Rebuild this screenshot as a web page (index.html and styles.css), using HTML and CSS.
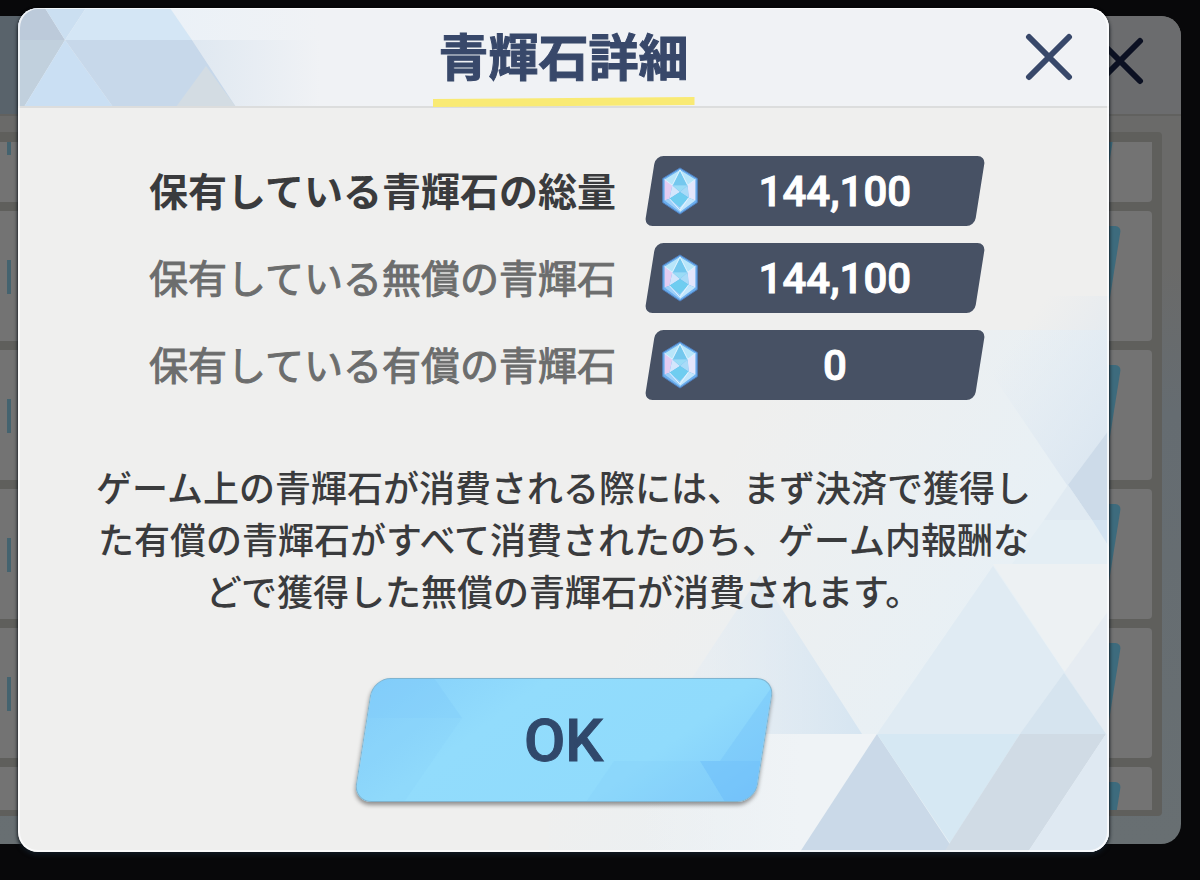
FILE: index.html
```html
<!DOCTYPE html>
<html lang="ja">
<head>
  <meta charset="UTF-8">
  <meta name="viewport" content="width=device-width, initial-scale=1">
  <title>青輝石詳細</title>
  <link rel="stylesheet" href="styles.css">
</head>
<body>
  <svg class="defs" aria-hidden="true">
    <symbol id="gem" viewBox="0 0 40 50">
      <path d="M20 1 L38 12 V37 L20 49 L2 37 V12 Z" fill="#6aaeee" stroke="#4f7fc0" stroke-linejoin="round"/>
      <path d="M20 3 L36 13 L28 19 L20 9 L12 19 L4 13 Z" fill="#b8e6fa"/>
      <path d="M20 3 L28 19 H12 Z" fill="#74c8ee"/>
      <path d="M4 13 L12 19 L9 33 L4 35 Z" fill="#e4cdf2"/>
      <path d="M12 19 L20 26 L9 33 Z" fill="#d3e6fc"/>
      <path d="M12 19 H28 L20 26 Z" fill="#9adcf6"/>
      <path d="M28 19 L36 13 V35 L29 32 Z" fill="#e4e6fc"/>
      <path d="M28 19 L29 32 L20 26 Z" fill="#a9dbf8"/>
      <path d="M20 26 L29 32 L20 42 L9 33 Z" fill="#6fcdf0"/>
      <path d="M4 35 L9 33 L20 42 V47 Z" fill="#9ed0fa"/>
      <path d="M36 35 L29 32 L20 42 V47 Z" fill="#c2e6fc"/>
      <path d="M20 3 L28 19 L36 13 M20 3 L12 19 L4 13 M29 32 L20 45 L9 33" fill="none" stroke="#e4f5ff"/>
    </symbol>
    <symbol id="cross" viewBox="0 0 48 48">
      <path d="M4 4 L44 44 M44 4 L4 44" fill="none" stroke="currentColor" stroke-width="6" stroke-linecap="round"/>
    </symbol>
  </svg>

  <div class="back-panel" aria-hidden="true">
    <div class="back-header">
      <svg class="cross"><use href="#cross"/></svg>
    </div>
    <div class="back-frame">
      <div class="back-list">
        <div class="back-row scrolled"><i class="tick"></i><i class="buy"></i></div>
        <div class="back-row"><i class="tick"></i><i class="buy"></i></div>
        <div class="back-row"><i class="tick"></i><i class="buy"></i></div>
        <div class="back-row"><i class="tick"></i><i class="buy"></i></div>
        <div class="back-row"><i class="tick"></i><i class="buy"></i></div>
        <div class="back-row"><i class="tick"></i><i class="buy"></i></div>
      </div>
    </div>
  </div>

  <main class="modal" role="dialog" aria-labelledby="modal-title">
    <header class="modal-header">
      <svg class="header-art" viewBox="18 8 402 98" aria-hidden="true">
        <defs>
          <linearGradient id="fade" gradientUnits="userSpaceOnUse" x1="190" y1="0" x2="320" y2="0">
            <stop offset="0" stop-color="#dfe8f1"/>
            <stop offset="1" stop-color="#f0f2f5"/>
          </linearGradient>
          <linearGradient id="fade-top" gradientUnits="userSpaceOnUse" x1="170" y1="0" x2="320" y2="0">
            <stop offset="0" stop-color="#ebf1f7"/>
            <stop offset="1" stop-color="#f0f2f5"/>
          </linearGradient>
        </defs>
        <path d="M170 8 H420 V40 H192 Z" fill="url(#fade-top)"/>
        <path d="M192 40 H420 V107 H236 Z" fill="url(#fade)"/>
        <path d="M18 8 H45 L65 40 H18 Z" fill="#bccada"/>
        <path d="M45 8 H86 L65 40 Z" fill="#cbdff1"/>
        <path d="M86 8 H170 L192 40 H65 Z" fill="#d4e6f5"/>
        <path d="M18 40 H65 L24 107 H18 Z" fill="#c1d0dd"/>
        <path d="M65 40 L113 107 H24 Z" fill="#cadff3"/>
        <path d="M65 40 H192 L236 107 H113 Z" fill="#c7d8ea"/>
        <path d="M206 66 L236 107 H176 Z" fill="#d3dce3"/>
      </svg>
      <h1 id="modal-title">青輝石詳細</h1>
      <button class="close" type="button" aria-label="閉じる">
        <svg class="cross" aria-hidden="true"><use href="#cross"/></svg>
      </button>
    </header>

    <div class="modal-body">
      <svg class="body-art" viewBox="549 252 560 600" aria-hidden="true">
        <defs>
          <linearGradient id="haze" gradientUnits="userSpaceOnUse" x1="700" y1="500" x2="960" y2="650">
            <stop offset="0" stop-color="#e8f0f5" stop-opacity="0"/>
            <stop offset="1" stop-color="#e8f0f5"/>
          </linearGradient>
          <linearGradient id="left-fade">
            <stop offset="0" stop-color="#e4ecf4" stop-opacity="0.2"/>
            <stop offset="1" stop-color="#d6e5f1"/>
          </linearGradient>
          <linearGradient id="white-fade" gradientUnits="userSpaceOnUse" x1="640" y1="0" x2="800" y2="0">
            <stop offset="0" stop-color="#eff3f6" stop-opacity="0"/>
            <stop offset="1" stop-color="#eff3f6"/>
          </linearGradient>
          <linearGradient id="top-fade" gradientUnits="userSpaceOnUse" x1="1000" y1="360" x2="1109" y2="440">
            <stop offset="0" stop-color="#dfe8f1" stop-opacity="0"/>
            <stop offset="1" stop-color="#dce7f1"/>
          </linearGradient>
        </defs>
        <path d="M549 330 H1109 V852 H549 Z" fill="url(#haze)"/>
        <path d="M962 330 L985 296 H1109 V547 Z" fill="url(#top-fade)"/>
        <path d="M1109 430 L1068 485 L1092 520 H1109 Z" fill="#cddbe9"/>
        <path d="M1068 485 L1092 520 H1044 Z" fill="#e0eaf2"/>
        <path d="M1092 520 L1109 547 V520 Z" fill="#d3e3f1"/>
        <path d="M1044 520 H1092 L1109 547 V564 H1012 Z" fill="#e4eef4"/>
        <path d="M993 564 H1109 V734 H1106 Z" fill="#edf1f3"/>
        <path d="M1109 610 L1064 673 L1106 734 H1109 Z" fill="#e6ecf2"/>
        <path d="M760 575 L862 734 H655 Z" fill="url(#left-fade)"/>
        <path d="M993 566 L1106 734 H877 Z" fill="#e0ebf3"/>
        <path d="M1064 673 L1106 734 H1020 Z" fill="#d6e4ef"/>
        <path d="M620 734 H877 L800 852 H620 Z" fill="url(#white-fade)"/>
        <path d="M877 734 L955 852 H800 Z" fill="#cad9e8"/>
        <path d="M877 734 H1020 L950 843 Z" fill="#d6e8f3"/>
        <path d="M1020 734 H1106 L1028 852 H944 Z" fill="#d0dbe5"/>
        <path d="M1106 734 H1109 V852 H1028 Z" fill="#dfe9f2"/>
      </svg>

      <dl class="stones">
        <dt class="total">保有している青輝石の総量</dt>
        <dd><svg class="gem" aria-hidden="true"><use href="#gem"/></svg><span>144,100</span></dd>
        <dt>保有している無償の青輝石</dt>
        <dd><svg class="gem" aria-hidden="true"><use href="#gem"/></svg><span>144,100</span></dd>
        <dt>保有している有償の青輝石</dt>
        <dd><svg class="gem" aria-hidden="true"><use href="#gem"/></svg><span>0</span></dd>
      </dl>

      <p class="note">ゲーム上の青輝石が消費される際には、まず決済で獲得し<br>た有償の青輝石がすべて消費されたのち、ゲーム内報酬な<br>どで獲得した無償の青輝石が消費されます。</p>

      <button class="ok" type="button">
        <svg class="ok-art" viewBox="0 0 420 124" aria-hidden="true">
          <clipPath id="ok-shape">
            <rect x="10" y="1" width="400" height="122" rx="17" transform="translate(210 62) skewX(-9) translate(-210 -62)"/>
          </clipPath>
          <g clip-path="url(#ok-shape)">
            <path d="M0 0 H80 L108 40 H0 Z" fill="#7cc8fa" fill-opacity="0.3"/>
            <path d="M0 40 H108 L50 124 H0 Z" fill="#7cc8fa" fill-opacity="0.12"/>
            <path d="M346 83 H420 V124 H371 Z" fill="#66b8f8" fill-opacity="0.45"/>
            <path d="M420 6 L366 83 H420 Z" fill="#6fbffa" fill-opacity="0.35"/>
            <path d="M260 83 H346 L371 124 H232 Z" fill="#78c6fb" fill-opacity="0.18"/>
          </g>
        </svg>
        <span>OK</span>
      </button>
    </div>
  </main>
</body>
</html>
```

FILE: styles.css
```css
* {
  box-sizing: border-box;
}
body {
  margin: 0;
  min-height: 100vh;
  padding: 8px 91px 28px 18px;
  position: relative;
  overflow-x: hidden;
  background: #08080a;
  color: #3a3b3d;
  font-family: "Noto Sans CJK JP", sans-serif;
}
.defs {
  position: absolute;
  width: 0;
  height: 0;
}
.cross {
  display: block;
  width: 48px;
  height: 48px;
}

/* dimmed shop window under the dialog */
.back-panel {
  position: absolute;
  top: 16px;
  right: 19px;
  bottom: 36px;
  left: -60px;
  display: flex;
  flex-direction: column;
  padding-bottom: 28px;
  border-radius: 20px;
  background: linear-gradient(#6a6a69 30%, #656c71 48%, #686f72);
}
.back-header {
  display: flex;
  align-items: center;
  justify-content: flex-end;
  height: 100px;
  padding: 0 37px 8px 0;
  border-bottom: 2px solid #61615f;
  border-radius: 20px 20px 0 0;
  background: linear-gradient(90deg, #59636b 80px, #6b6c6e 400px);
  color: #0b1022;
}
.back-frame {
  flex: 1;
  min-height: 0;
  margin: 16px 19px 0 0;
  padding: 10px 10px 6px 0;
  border-radius: 4px;
  background: #5f5f5c;
}
.back-list {
  display: flex;
  flex-direction: column;
  gap: 9px;
  height: 100%;
  overflow: hidden;
}
.back-row {
  flex: none;
  display: flex;
  justify-content: space-between;
  height: 130px;
  padding: 15px 38px 0 67px;
  border-radius: 4px;
  background: #737373;
}
.back-row.scrolled {
  margin-top: -70px;
}
.tick {
  width: 4px;
  height: 34px;
  margin-top: 34px;
  background: #44636f;
}
.buy {
  width: 140px;
  height: 92px;
  border-radius: 6px;
  background: #3d6b7d;
  transform: skewX(-9deg);
}

/* dialog */
.modal {
  position: relative;
  display: flex;
  flex-direction: column;
  min-height: calc(100vh - 36px);
  overflow: hidden;
  border-radius: 20px;
  background: #efefee;
  box-shadow: 0 3px 4px #101820, 0 0 3px #0008;
}
.modal::after {
  content: "";
  position: absolute;
  inset: 0;
  border: 2px solid #fffb;
  border-top-width: 1px;
  border-radius: 20px;
  pointer-events: none;
}
.modal-header {
  position: relative;
  display: grid;
  grid-template-columns: 1fr auto 1fr;
  height: 100px;
  padding: 0 36px;
  border-bottom: 2px solid #dcdddd;
  background: #f0f2f5;
}
.header-art {
  position: absolute;
  top: 0;
  left: 0;
  width: 402px;
  height: 98px;
}
.modal-header h1 {
  grid-column: 2;
  position: relative;
  margin: 0;
  padding: 0 6px;
  color: #38486a;
  font-size: 50px;
  font-weight: 700;
  line-height: 92px;
  -webkit-text-stroke: 1px;
}
.modal-header h1::after {
  content: "";
  position: absolute;
  right: 0;
  bottom: -1px;
  left: 0;
  height: 10px;
  background: #f9ea74;
  clip-path: polygon(0 20%, 100% 0, 100% 80%, 0 100%);
}
.close {
  align-self: center;
  justify-self: end;
  padding: 0;
  border: 0;
  background: none;
  color: #38486a;
  cursor: pointer;
}
.modal-body {
  position: relative;
  flex: 1;
  display: flex;
  flex-direction: column;
  align-items: center;
  padding: 48px 16px;
}
.body-art {
  position: absolute;
  right: 0;
  bottom: 0;
  width: 560px;
  height: 600px;
}

.stones {
  position: relative;
  display: grid;
  grid-template-columns: auto 342px;
  gap: 17px 28px;
  margin: 0 0 0 8px;
}
.stones dt {
  color: #6c6d6d;
  font-size: 39px;
  line-height: 66px;
  -webkit-text-stroke: 1px;
}
.stones .total {
  color: #3a3b3d;
  font-weight: 700;
  -webkit-text-stroke: 0;
}
.stones dd {
  position: relative;
  display: flex;
  align-items: center;
  height: 70px;
  margin: 0;
  padding: 0 16px;
  color: #fff;
  font-family: Roboto, sans-serif;
  font-size: 42px;
  font-weight: 500;
  -webkit-text-stroke: 1px;
}
.stones dd::before {
  content: "";
  position: absolute;
  inset: 0 6px;
  border-radius: 8px;
  background: #475164;
  transform: skewX(-9deg);
}
.stones dd span {
  position: relative;
  flex: 1;
  text-align: center;
}
.gem {
  position: relative;
  width: 40px;
  height: 48px;
}

.note {
  position: relative;
  margin: 60px 0 62px;
  font-size: 36px;
  font-weight: 500;
  line-height: 52px;
  text-align: center;
}

.ok {
  position: relative;
  width: 420px;
  height: 124px;
  padding: 0;
  border: 0;
  background: none;
  color: #30486b;
  font-family: Roboto, sans-serif;
  font-size: 60px;
  font-weight: 500;
  cursor: pointer;
  -webkit-text-stroke: 1px;
}
.ok::before {
  content: "";
  position: absolute;
  inset: 0 9px;
  border: 1px solid #7eb4d0;
  border-radius: 18px;
  background: linear-gradient(140deg, #85cffb, #92dcfc 32%, #90dbfc 70%, #7fcbfb);
  box-shadow: 0 3px 4px #0006;
  transform: skewX(-9deg);
}
.ok-art {
  position: absolute;
  inset: 0;
  width: 100%;
  height: 100%;
}
.ok span {
  position: relative;
}
```
